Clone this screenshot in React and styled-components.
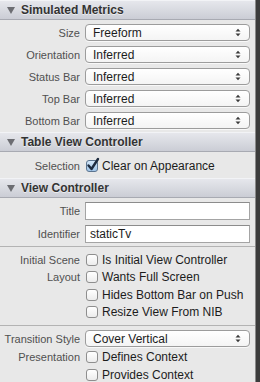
import React from 'react';
import styled, {createGlobalStyle} from 'styled-components';

const Global = createGlobalStyle`
  html, body {
    margin: 0;
    padding: 0;
    background: #3c3c3c;
  }
  body {
    font-family: 'Liberation Sans', Arial, sans-serif;
  }
`

const Panel = styled.div`
  width: 255px;
  height: 382px;
  background: #e8e8e8;
  border-right: 1px solid #8a8a8a;
  overflow: hidden;
`

const Header = styled.div`
  height: 18px;
  display: flex;
  align-items: center;
  gap: 6px;
  padding-left: 7px;
  background: linear-gradient(#e6e7ec, #cbcdd5);
  border-top: 1px solid #f2f3f6;
  border-bottom: 1px solid #a8aab2;
  color: #333;
  font-size: 12px;
  font-weight: bold;
  text-shadow: 0 1px 0 rgba(255, 255, 255, 0.6);
`

const Triangle = styled.span`
  width: 0;
  height: 0;
  border-left: 4px solid transparent;
  border-right: 4px solid transparent;
  border-top: 7px solid #6c6d72;
  margin-top: 1px;
`

const Body = styled.div`
  display: flex;
  flex-direction: column;
  gap: ${p => p.$gap || 0}px;
  padding: ${p => p.$pad || '0'};
  border-bottom: ${p => (p.$line ? '1px solid #b3b3b3' : 'none')};
`

const Row = styled.div`
  display: grid;
  grid-template-columns: 80px 1fr;
  column-gap: 5px;
  align-items: center;
  padding-right: 5px;
  height: ${p => p.$h || 17}px;
`

const Label = styled.div`
  text-align: right;
  font-size: 11px;
  color: #505050;
  white-space: nowrap;
`

const Popup = styled.div`
  height: 15px;
  border: 1px solid #9c9c9c;
  border-radius: 4px;
  background: linear-gradient(#ffffff, #f4f4f4);
  display: flex;
  align-items: center;
  justify-content: space-between;
  padding: 0 8px 0 7px;
  font-size: 12px;
  color: #1c1c1c;
  box-shadow: 0 1px 0 rgba(255, 255, 255, 0.7);
`

const Field = styled.div`
  height: 16px;
  border: 1px solid #a4a4a4;
  border-top-color: #8c8c8c;
  background: #fff;
  display: flex;
  align-items: center;
  padding-left: 4px;
  font-size: 12px;
  color: #1c1c1c;
`

const CheckLine = styled.div`
  display: flex;
  align-items: center;
  gap: 4px;
  font-size: 12px;
  color: #1c1c1c;
  padding-left: 1px;
  white-space: nowrap;
`

const Box = styled.span`
  width: 10px;
  height: 10px;
  border: 1px solid #8e8e8e;
  border-radius: 3px;
  background: linear-gradient(#ffffff, #ececec);
  position: relative;
  flex: none;
`

const Arrows = () => (
  <svg width="6" height="9" viewBox="0 0 6 9">
    <path d="M0.5 3.5 L3 0.8 L5.5 3.5 Z" fill="#3a3a3a" />
    <path d="M0.5 5.5 L3 8.2 L5.5 5.5 Z" fill="#3a3a3a" />
  </svg>
)

const Check = styled.svg`
  position: absolute;
  left: -1px;
  top: -4px;
`

const CheckBox = ({checked}) => (
  <Box style={checked ? {background: 'linear-gradient(#d3e6f8, #9fc4e8)', borderColor: '#5c7590'} : null}>
    {checked && (
      <Check width="14" height="15" viewBox="0 0 14 15">
        <path d="M2.5 8.5 L5.5 12 L12 2" stroke="#1d2b3f" strokeWidth="2.4" fill="none" strokeLinecap="round" strokeLinejoin="round" />
      </Check>
    )}
  </Box>
)

const PopupRow = ({label, value, h}) => (
  <Row $h={h}>
    <Label>{label}</Label>
    <Popup>
      <span>{value}</span>
      <Arrows />
    </Popup>
  </Row>
)

const CheckRow = ({label, text, checked, h}) => (
  <Row $h={h}>
    <Label>{label}</Label>
    <CheckLine>
      <CheckBox checked={checked} />
      {text}
    </CheckLine>
  </Row>
)

const FieldRow = ({label, value}) => (
  <Row $h={18}>
    <Label>{label}</Label>
    <Field>{value}</Field>
  </Row>
)

export default function App() {
  return (
    <Panel>
      <Global />
      <Header><Triangle />Simulated Metrics</Header>
      <Body $gap={5} $pad="4px 0 3px">
        <PopupRow label="Size" value="Freeform" />
        <PopupRow label="Orientation" value="Inferred" />
        <PopupRow label="Status Bar" value="Inferred" />
        <PopupRow label="Top Bar" value="Inferred" />
        <PopupRow label="Bottom Bar" value="Inferred" />
      </Body>
      <Header><Triangle />Table View Controller</Header>
      <Body $pad="5px 0 4px">
        <CheckRow label="Selection" text="Clear on Appearance" checked />
      </Body>
      <Header><Triangle />View Controller</Header>
      <Body $gap={5} $pad="4px 0 3px" $line>
        <FieldRow label="Title" value="" />
        <FieldRow label="Identifier" value="staticTv" />
      </Body>
      <Body $pad="4px 0 5px" $line>
        <CheckRow label="Initial Scene" text="Is Initial View Controller" />
        <CheckRow label="Layout" text="Wants Full Screen" h={18} />
        <CheckRow label="" text="Hides Bottom Bar on Push" />
        <CheckRow label="" text="Resize View From NIB" />
      </Body>
      <Body $pad="4px 0 0">
        <PopupRow label="Transition Style" value="Cover Vertical" />
        <CheckRow label="Presentation" text="Defines Context" h={19} />
        <CheckRow label="" text="Provides Context" h={18} />
      </Body>
    </Panel>
  );
}
